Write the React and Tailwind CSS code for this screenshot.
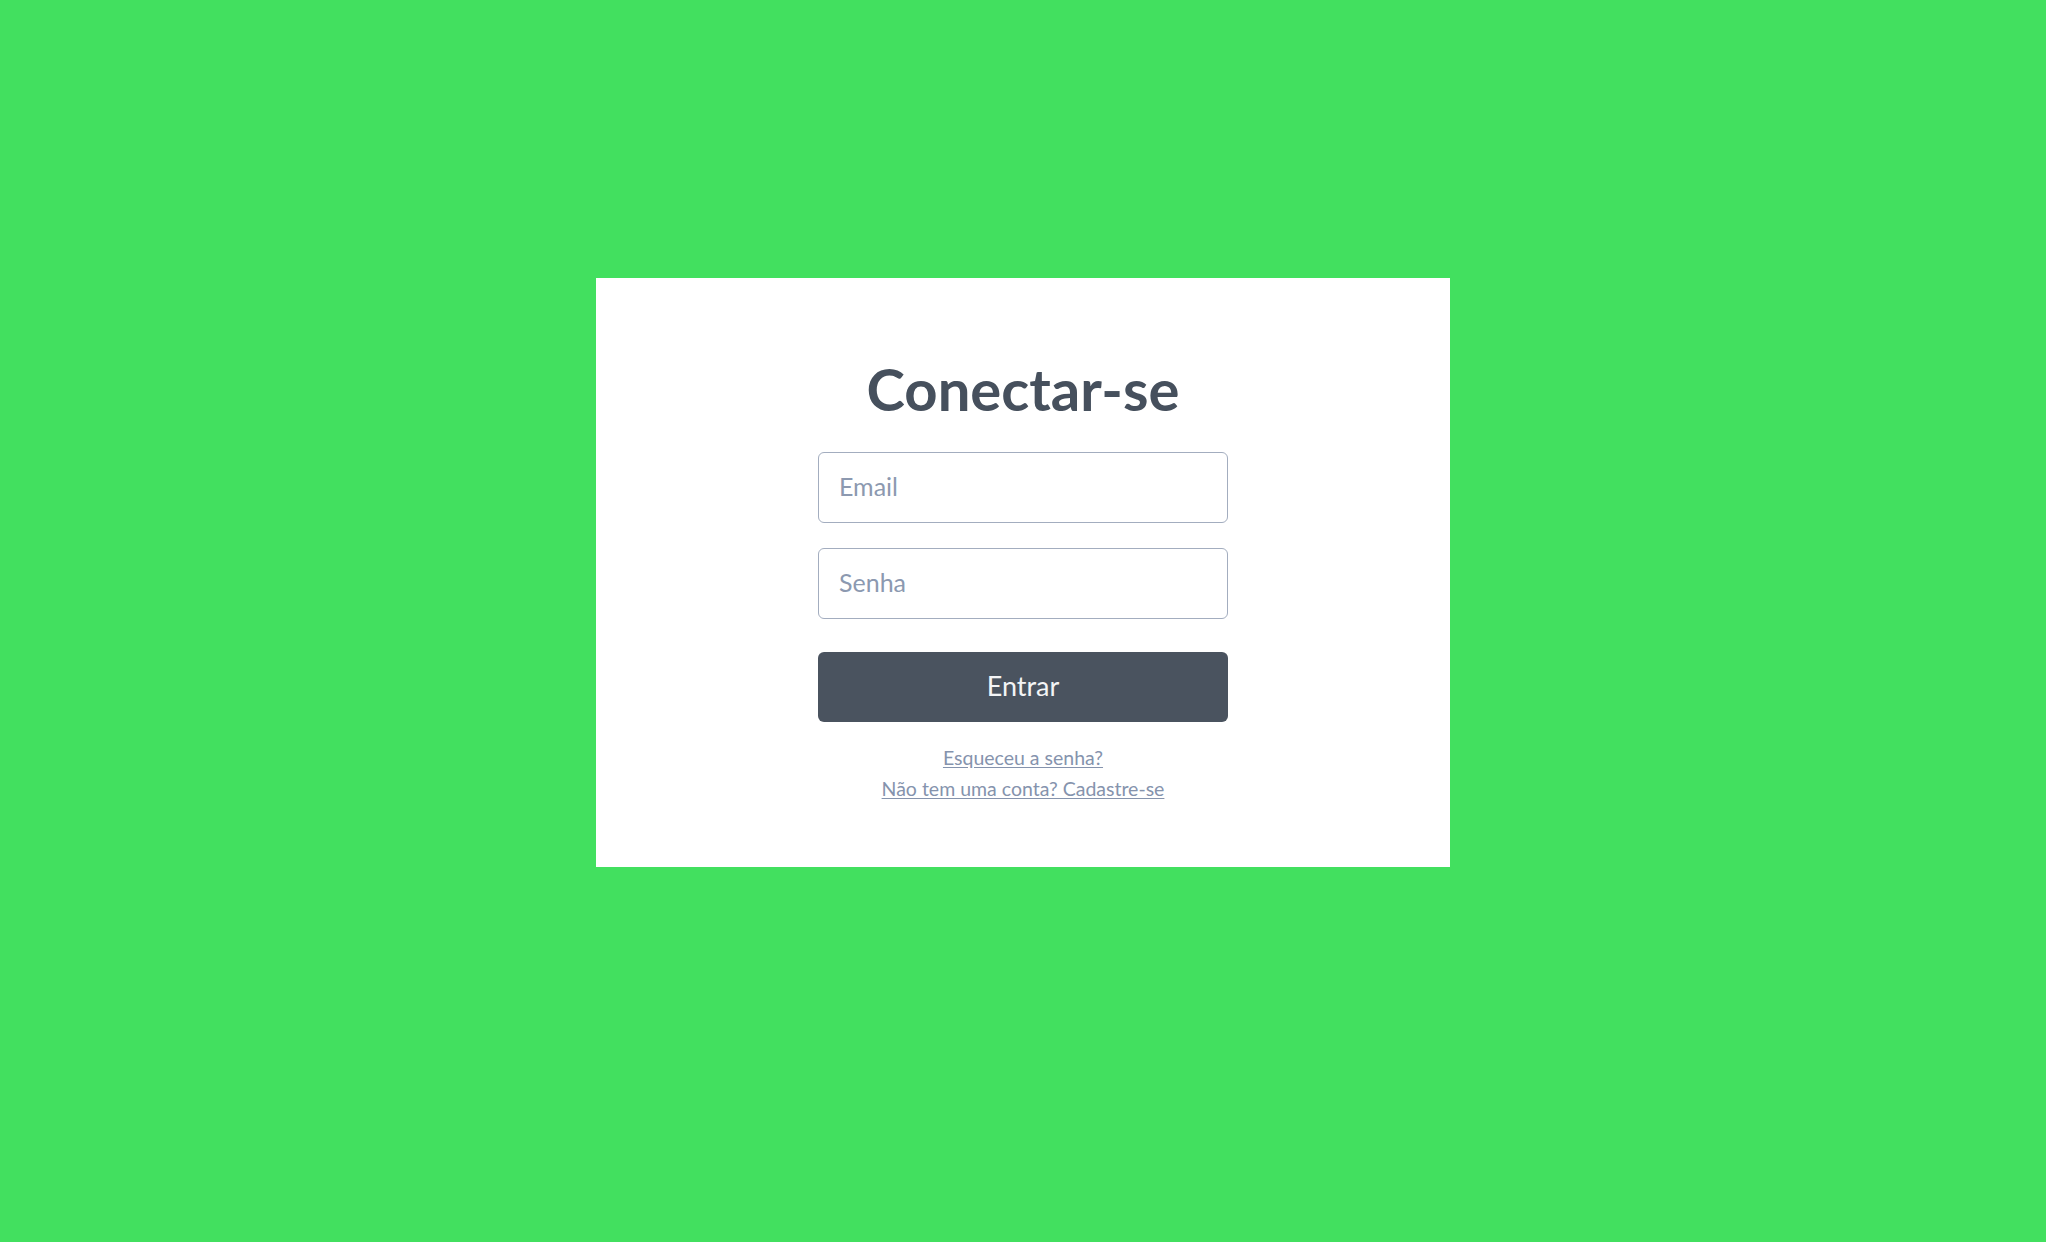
import React from 'react';

export default function App() {
  return (
    <div className="min-h-screen w-full bg-[#42e05f] flex justify-center pt-[278px]" style={{ fontFamily: 'Lato, "Open Sans", sans-serif' }}>
      <div className="w-[854px] h-[589px] bg-white flex flex-col items-center pt-[77px]">
        <h1 className="text-[58px] leading-[67px] font-bold text-[#46505d]">Conectar-se</h1>

        <form className="w-[410px] flex flex-col mt-[30px]" onSubmit={(e) => e.preventDefault()}>
          <input
            type="email"
            placeholder="Email"
            className="h-[71px] w-full rounded-[6px] border border-[#a3adbf] px-[20px] pb-[3px] text-[25px] text-[#46505d] placeholder:text-[#8c99b0] outline-none"
          />
          <input
            type="password"
            placeholder="Senha"
            className="h-[71px] w-full rounded-[6px] border border-[#a3adbf] px-[20px] pb-[3px] text-[25px] text-[#46505d] placeholder:text-[#8c99b0] outline-none mt-[25px]"
          />
          <button
            type="submit"
            className="h-[70px] w-full rounded-[6px] bg-[#4a535f] text-[27px] text-[#f3f4f6] pb-[2px] mt-[33px]"
          >
            Entrar
          </button>
        </form>

        <div className="flex flex-col items-center mt-[20px] text-[19.5px] leading-[31px] text-[#8593ad]">
          <a href="#" className="underline underline-offset-2">Esqueceu a senha?</a>
          <a href="#" className="underline underline-offset-2">Não tem uma conta? Cadastre-se</a>
        </div>
      </div>
    </div>
  );
}
